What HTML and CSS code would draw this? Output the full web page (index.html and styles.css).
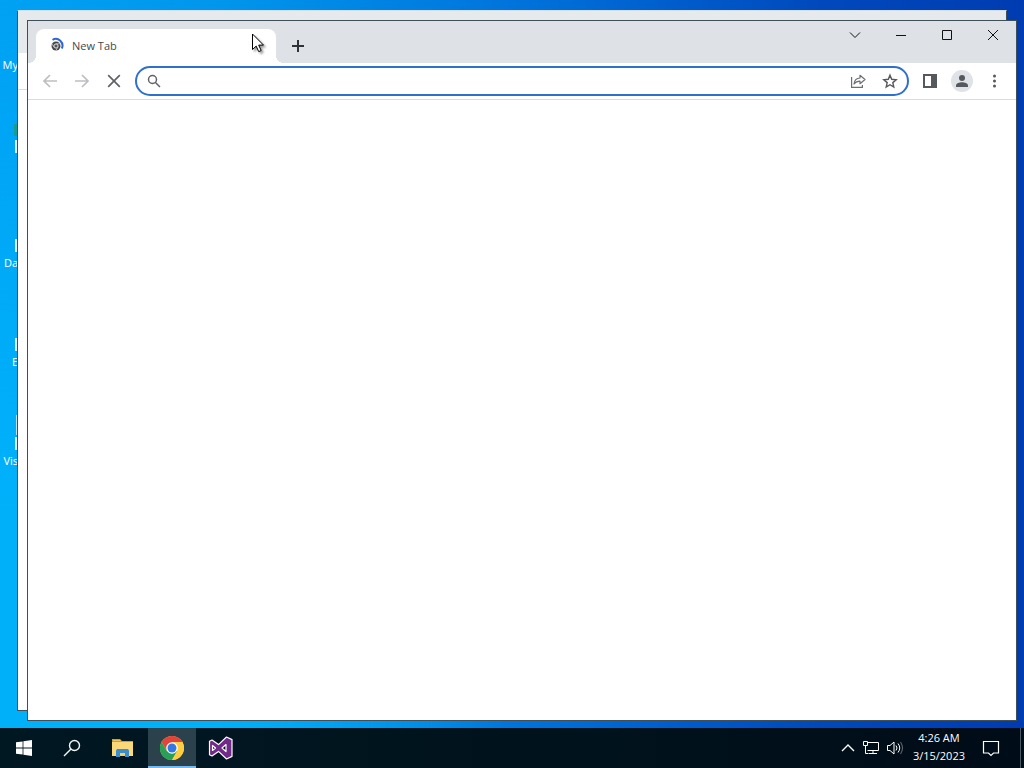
FILE: index.html
```
<!DOCTYPE html>
<html lang="en">
<head>
    <meta charset="UTF-8">
    <meta name="viewport" content="width=device-width, initial-scale=1.0">
    <title>New Tab</title>
    <link rel="stylesheet" href="styles.css">
</head>
<body>

    <main class="desktop">
        <!-- Desktop shortcuts -->
        <ul class="shortcuts">
            <li><span>My</span></li>
            <li><i class="leaf"></i><i class="arrow"></i><span></span></li>
            <li><i class="arrow"></i><span>Da</span></li>
            <li><i class="arrow"></i><span>E</span></li>
            <li><i class="page"></i><i class="arrow"></i><span>Vis</span></li>
        </ul>

        <!-- Window behind -->
        <div class="window window-back">
            <div class="back-tabs"></div>
            <div class="back-toolbar"></div>
        </div>

        <!-- Browser window -->
        <section class="window window-front">
            <header class="tabstrip">
                <div class="tab">
                    <svg width="16" height="16" viewBox="0 0 16 16">
                        <circle cx="6" cy="9" r="4.500" fill="#45484b"/>
                        <circle cx="6" cy="9" r="2.100" fill="#555" stroke="#dfe1e3" stroke-width="1"/>
                        <path d="M6 6.800H10.500M4.100 10.200L1.800 6.700M7.900 10.200L5.800 13.600" stroke="#c9cbcd" stroke-width=".8"/>
                        <path d="M2.500 2.800A6.700 6.700 0 0 1 11.800 11.500" fill="none" stroke="#2f66d0" stroke-width="2"/>
                    </svg>
                    <span>New Tab</span>
                </div>
                <button class="new-tab" aria-label="New tab">
                    <svg width="16" height="16" viewBox="0 0 16 16"><path d="M8 2v12M2 8h12" stroke="#303236" stroke-width="2"/></svg>
                </button>
                <div class="controls">
                    <button aria-label="Search tabs"><svg width="12" height="12" viewBox="0 0 12 12"><path d="M1 3.500l5 5 5-5"/></svg></button>
                    <button aria-label="Minimize"><svg width="12" height="12" viewBox="0 0 12 12"><path d="M1 6.500h10"/></svg></button>
                    <button aria-label="Maximize"><svg width="12" height="12" viewBox="0 0 12 12"><path d="M1.500 1.500h9v9h-9z"/></svg></button>
                    <button aria-label="Close"><svg width="12" height="12" viewBox="0 0 12 12"><path d="M1 1l10 10M11 1L1 11"/></svg></button>
                </div>
            </header>

            <div class="toolbar">
                <button class="nav" aria-label="Back" disabled><svg width="16" height="16" viewBox="0 0 16 16"><path d="M15 8H2M8 2L2 8l6 6"/></svg></button>
                <button class="nav" aria-label="Forward" disabled><svg width="16" height="16" viewBox="0 0 16 16"><path d="M1 8h13M8 2l6 6-6 6"/></svg></button>
                <button class="nav" aria-label="Stop loading"><svg width="16" height="16" viewBox="0 0 16 16"><path d="M2.200 2.200l11.600 11.600M13.800 2.200L2.200 13.800"/></svg></button>
                <div class="omnibox">
                    <svg width="16" height="16" viewBox="0 0 16 16" fill="none" stroke="#5f6368" stroke-width="1.500"><circle cx="6.500" cy="6.500" r="4"/><path d="M9.500 9.500L14 14"/></svg>
                    <input type="text" aria-label="Address and search bar">
                    <button aria-label="Share"><svg width="16" height="16" viewBox="0 0 16 16" fill="none" stroke="#6b6f74" stroke-width="1.200"><path d="M1.600 4v10.400h10.800V12"/><path d="M4 11c.4-4 2.400-5.800 6-6V2.300L15 6.500l-5 4.200V8.200c-2.600 0-4.500.8-6 2.800z" stroke-linejoin="round"/></svg></button>
                    <button aria-label="Bookmark this tab"><svg width="16" height="16" viewBox="0 0 16 16" fill="none" stroke="#55585d" stroke-width="1.400"><path d="M8 2.200l1.700 4.100 4.500.4-3.400 2.900 1 4.400L8 11.700 4.200 14l1-4.400-3.400-2.900 4.500-.4z"/></svg></button>
                </div>
                <button class="tool" aria-label="Side panel"><svg width="16" height="16" viewBox="0 0 16 16"><path d="M1 1h14v14H1zM3 3v10h6V3z" fill="#55585d" fill-rule="evenodd"/></svg></button>
                <button class="tool avatar" aria-label="Profile"><svg width="16" height="16" viewBox="0 0 16 16" fill="#55595e"><circle cx="8" cy="5" r="3"/><path d="M2 14v-1.500C2 10.300 5.500 9.300 8 9.300s6 1 6 3.200V14z"/></svg></button>
                <button class="tool" aria-label="Menu"><svg width="16" height="16" viewBox="0 0 16 16" fill="#55585d"><circle cx="8.500" cy="3" r="1.500"/><circle cx="8.500" cy="8" r="1.500"/><circle cx="8.500" cy="13" r="1.500"/></svg></button>
            </div>

            <div class="page-content"></div>
        </section>

        <svg class="cursor" width="14" height="20" viewBox="0 0 14 20"><path d="M.5 1v15.500l3.700-3.400 2.500 5.500 2.500-1.100-2.500-5.400h4.800z" fill="#fff" stroke="#000"/></svg>
    </main>

    <!-- Taskbar -->
    <footer class="taskbar">
        <button aria-label="Start"><svg width="16" height="16" viewBox="0 0 16 16" fill="#fff"><path d="M0 2.300L6.600 1.400V7.500H0zM7.400 1.300L16 0v7.500H7.400zM0 8.400h6.600v6.200L0 13.700zM7.400 8.400H16V16l-8.600-1.300z"/></svg></button>
        <button aria-label="Search"><svg width="18" height="18" viewBox="0 0 18 18" fill="none" stroke="#f2f5f7" stroke-width="1.400"><circle cx="11.500" cy="6.500" r="5"/><path d="M8 10l-7 7"/></svg></button>
        <button class="app" aria-label="File Explorer">
            <svg width="24" height="24" viewBox="0 0 24 24"><path d="M2 3h8l2 2h11v2H2z" fill="#d99c26"/><path d="M3 4h7l1 1H3z" fill="#f3c456"/><path d="M2 6h21v14H2z" fill="#fbd978"/><path d="M6 21v-6.500l1-1.500h11l1 1.500V21h-4v-4h-5v4z" fill="#3c8dcb"/><path d="M10 17h5v3h-5z" fill="#f8cf66"/></svg>
        </button>
        <button class="app active" aria-label="Chrome">
            <svg width="24" height="24" viewBox="0 0 24 24"><circle cx="12" cy="12" r="12" fill="#ffcd40"/><path d="M1.600 6A12 12 0 0 1 22.400 6H12L7 15z" fill="#e2443b"/><path d="M1.600 6A12 12 0 0 0 12 24l5.200-9-10.400 0z" fill="#27a157"/><path d="M12 6h10.400A12 12 0 0 1 12 24l5.200-9z" fill="#ffcd40"/><circle cx="12" cy="12" r="5.800" fill="#fff"/><circle cx="12" cy="12" r="4.500" fill="#3478e5"/></svg>
        </button>
        <button class="app" aria-label="Visual Studio">
            <svg width="26" height="24" viewBox="0 0 26 24"><path d="M18.500 1L24 3.600v16.800L18.500 23l-8-7.600L4 20l-2.500-1.300V5.300L4 4l6.500 4.600zM18 8.500L14 12l4 3.500zM4.500 9.500v5L7.500 12z" fill="#722a8a" stroke="#fff" stroke-width="1.200" fill-rule="evenodd" stroke-linejoin="round"/></svg>
        </button>
        <div class="tray">
            <svg width="16" height="16" viewBox="0 0 16 16"><path d="M2 11l6-6 6 6" stroke-width="1.400"/></svg>
            <svg width="18" height="16" viewBox="0 0 18 16"><path d="M6 2.500h10.500v8H5.500M11 10.500v3M7 13.500h8M1.500 1.500h4v4h-4zM3.500 5.500v8h3"/></svg>
            <svg width="18" height="16" viewBox="0 0 18 16"><path d="M1.500 5.500h2.500l4-3.500v12l-4-3.500H1.500zM10 5.500q2 2.500 0 5M12 3.500q3.500 4.500 0 9"/><path d="M14.500 2q4 6 0 12" stroke-opacity=".4"/></svg>
        </div>
        <div class="clock">
            <time>4:26 AM</time>
            <time>3/15/2023</time>
        </div>
        <button class="notices" aria-label="Notifications"><svg width="18" height="18" viewBox="0 0 18 18" fill="none" stroke="#fff" stroke-width="1.200"><path d="M1.500 2.500h15v11.500h-5L9 16.500 6.500 14h-5z"/></svg></button>
        <div class="show-desktop"></div>
    </footer>

</body>
</html>
```
FILE: styles.css
```
* {
    box-sizing: border-box;
}
body {
    font-family: "Open Sans", "Noto Sans", sans-serif;
    font-size: 11px;
    margin: 0;
    min-height: 100vh;
    display: flex;
    flex-direction: column;
}
button {
    background: none;
    border: 0;
    padding: 0;
    display: flex;
    align-items: center;
    justify-content: center;
}
svg {
    display: block;
    flex-shrink: 0;
}

/* Desktop */
.desktop {
    flex: 1;
    position: relative;
    overflow: hidden;
    background: linear-gradient(to right, #00a2f4 0%, #0096ec 22%, #0074dc 50%, #0049bd 80%, #003cb1 100%);
}
.desktop::before {
    content: "";
    position: absolute;
    inset: 0 50% 0 0;
    background: linear-gradient(to bottom, transparent, #00b1fa 70%);
    mask-image: linear-gradient(to right, #000 40%, transparent);
}
.shortcuts {
    list-style: none;
    margin: 0;
    padding: 0;
    width: 18px;
    position: relative;
    color: #fff;
}
.shortcuts li {
    height: 99px;
    display: flex;
    flex-direction: column;
    justify-content: flex-end;
    align-items: flex-end;
}
.shortcuts li:first-child {
    height: 73px;
}
.shortcuts span {
    height: 16px;
    line-height: 16px;
}
.arrow {
    width: 3px;
    height: 13px;
    margin-bottom: 3px;
    background: #d9f2ff;
}
.leaf {
    width: 4px;
    height: 12px;
    margin-bottom: 4px;
    background: #1a9c90;
}
.page {
    width: 2px;
    height: 20px;
    margin-bottom: 2px;
    background: #b9e4fb;
}

/* Windows */
.window {
    position: absolute;
    display: flex;
    flex-direction: column;
    background: #fff;
    border: 1px solid #3f4f5a;
}
.window-back {
    inset: 10px 17px 17px 17px;
    border-top-color: #d5e0e8;
}
.window-front {
    inset: 20px 7px 7px 27px;
}
.back-tabs {
    height: 42px;
    background: #e7eaed;
}
.back-toolbar {
    height: 37px;
    border-bottom: 1px solid #dadce0;
}
.tabstrip {
    height: 42px;
    padding-left: 8px;
    display: flex;
    align-items: flex-end;
    background: #dee1e6;
}
.tab {
    width: 240px;
    height: 34px;
    padding: 0 14px 2px;
    display: flex;
    align-items: center;
    gap: 6px;
    position: relative;
    background: #fff;
    border-radius: 8px 8px 0 0;
    color: #45494d;
}
.tab::before,
.tab::after {
    content: "";
    position: absolute;
    bottom: 0;
    width: 8px;
    height: 8px;
}
.tab::before {
    right: 100%;
    background: radial-gradient(circle at 0 0, transparent 8px, #fff 8px);
}
.tab::after {
    left: 100%;
    background: radial-gradient(circle at 100% 0, transparent 8px, #fff 8px);
}
.new-tab {
    width: 28px;
    height: 34px;
    margin-left: 8px;
}
.controls {
    margin-left: auto;
    align-self: flex-start;
    display: flex;
}
.controls button {
    width: 46px;
    height: 28px;
}
.controls svg {
    fill: none;
    stroke: #111;
    stroke-width: 1;
}
.toolbar {
    height: 37px;
    padding: 0 6px;
    display: flex;
    align-items: center;
    border-bottom: 1px solid #dadce0;
}
.nav {
    width: 32px;
    height: 32px;
}
.nav svg {
    fill: none;
    stroke: #5f6368;
    stroke-width: 1.7;
}
.nav:disabled svg {
    stroke: #bcbec1;
}
.omnibox {
    flex: 1;
    min-width: 0;
    height: 30px;
    margin: 0 10px 0 5px;
    padding: 0 9px;
    display: flex;
    align-items: center;
    border: 2px solid #2f70cc;
    border-radius: 15px;
}
.omnibox input {
    flex: 1;
    min-width: 0;
    margin: 0 8px;
    border: 0;
    outline: 0;
    background: none;
    font: inherit;
}
.omnibox button {
    width: 16px;
    height: 24px;
    margin-left: 16px;
}
.tool {
    width: 22px;
    height: 22px;
    margin-right: 10px;
}
.tool:last-child {
    margin-right: 5px;
}
.avatar {
    border-radius: 50%;
    background: #dfe2e7;
}
.page-content {
    flex: 1;
}
.cursor {
    position: absolute;
    left: 252px;
    top: 33px;
    filter: drop-shadow(2px 2px 1px rgba(0, 0, 0, 0.4));
}

/* Taskbar */
.taskbar {
    height: 40px;
    display: flex;
    background: linear-gradient(to right, #001822, #00121c 60%, #000c18);
    color: #fff;
}
.taskbar button {
    width: 48px;
    height: 40px;
}
.taskbar .app {
    width: 50px;
}
.taskbar .app:nth-child(3) {
    width: 52px;
}
.taskbar .active {
    width: 48px;
    background: #2b414b;
    border-bottom: 2px solid #76b9ed;
    padding-top: 2px;
}
.tray {
    margin-left: auto;
    display: flex;
    align-items: center;
    gap: 6px;
}
.tray svg {
    fill: none;
    stroke: #fff;
    stroke-width: 1;
}
.clock {
    padding: 1px 0 0 9px;
    display: flex;
    flex-direction: column;
    align-items: center;
    line-height: 18px;
}
.taskbar .notices {
    width: 55px;
    padding-right: 4px;
}
.show-desktop {
    width: 4px;
    border-left: 1px solid #4a5966;
}
```
